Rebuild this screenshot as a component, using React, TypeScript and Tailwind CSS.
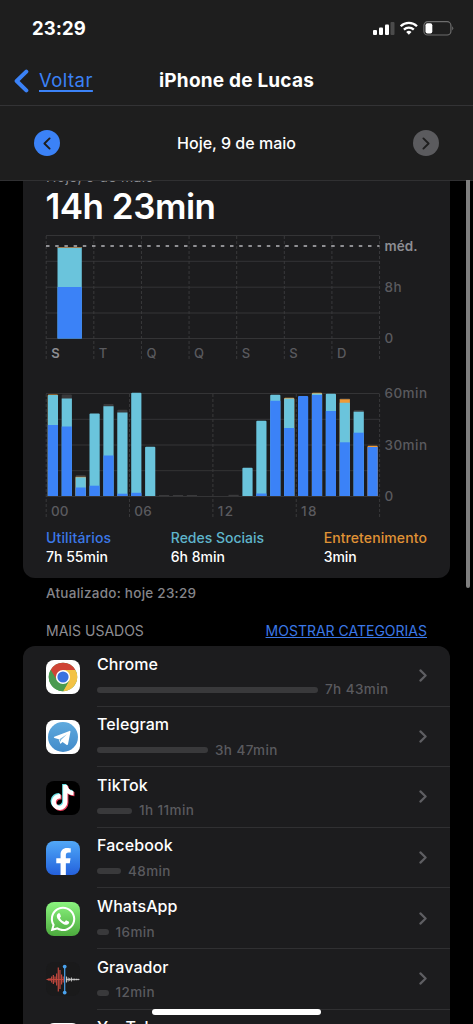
import type { ReactNode } from "react";
import { FaFacebookF, FaTiktok, FaWhatsapp } from "react-icons/fa";

const BLUE = "#3b82f7";
const TEAL = "#6ac4dc";
const ORANGE = "#f09a37";
const GRAY = "#39393b";

const ChromeIcon = () => (
    <svg viewBox="0 0 34 34" className="size-full bg-white">
        <circle cx="17" cy="17" r="14.2" fill="#4a9a4f" />
        <path d="M17 9.9H29.3A14.2 14.2 0 0 1 17 31.2L23.2 20.5Z" fill="#f3c244" />
        <path d="M4.7 9.9A14.2 14.2 0 0 1 29.3 9.9H17L10.9 20.6Z" fill="#cf4436" />
        <path d="M4.7 9.9L10.9 20.6L17 24L23.2 20.5L17 31.2A14.2 14.2 0 0 1 4.7 9.9Z" fill="#4a9a4f" />
        <circle cx="17" cy="17" r="7.1" fill="#fff" />
        <circle cx="17" cy="17" r="5.6" fill="#3871e0" />
    </svg>
);

const TelegramIcon = () => (
    <svg viewBox="0 0 34 34" className="size-full bg-white">
        <defs>
            <linearGradient id="telegram" x1="0" y1="0" x2="0" y2="1">
                <stop offset="0" stopColor="#5faade" />
                <stop offset="1" stopColor="#428bca" />
            </linearGradient>
        </defs>
        <circle cx="17" cy="17" r="15" fill="url(#telegram)" />
        <path
            d="M8.3 16.8L23.5 10.9Q24.6 10.6 24.4 11.9L22 24.2Q21.6 25.5 20.4 24.7L16.6 21.9L14.9 23.6Q14.2 24.1 14 23.1L12.8 19.2L8.4 17.9Q7.2 17.3 8.3 16.8Z"
            fill="#fff"
        />
        <path d="M13.4 19.3L21 14.3L15.2 19.7L14.6 22Z" fill="#7db7e0" />
    </svg>
);

const TikTokIcon = () => (
    <div className="relative size-full bg-black">
        <FaTiktok className="absolute left-[3px] top-[3.5px] size-[25px] text-[#69e0e5]" />
        <FaTiktok className="absolute left-[5px] top-[5.5px] size-[25px] text-[#e5405c]" />
        <FaTiktok className="absolute left-[4px] top-[4.5px] size-[25px] text-white" />
    </div>
);

const FacebookIcon = () => (
    <div className="flex size-full items-end justify-center bg-linear-to-b from-[#52a8f7] to-[#2560dc]">
        <FaFacebookF className="size-[27px]" />
    </div>
);

const WhatsAppIcon = () => (
    <div className="flex size-full items-center justify-center bg-linear-to-b from-[#8bf57f] to-[#4caa3d]">
        <FaWhatsapp className="size-[28px]" />
    </div>
);

const RecorderIcon = () => {
    const left = [1, 1.5, 3, 4.5, 3, 6, 12, 9.5, 5, 3];
    const right = [3, 2, 1.5, 2, 1, 1, 0.8, 0.8];
    return (
        <svg viewBox="0 0 34 34" className="size-full bg-[#1a1a1b]">
            <path d="M0.5 17.5H18" stroke="#b8433a" />
            <path d="M20 17.5H33.5" stroke="#d6d6d6" strokeWidth="0.8" />
            {left.map((h, i) => (
                <path key={i} d={`M${2.4 + i * 1.65} ${17.5 - h}V${17.5 + h}`} stroke="#c4493f" strokeWidth="1.2" />
            ))}
            {right.map((h, i) => (
                <path key={i} d={`M${20.5 + i * 1.65} ${17.5 - h}V${17.5 + h}`} stroke="#d6d6d6" strokeWidth="0.9" />
            ))}
            <path d="M18.7 4.5V30.5" stroke="#4aa3ef" strokeWidth="1.2" />
            <circle cx="18.7" cy="4.6" r="1.9" fill="#4aa3ef" />
            <circle cx="18.7" cy="30.6" r="1.9" fill="#4aa3ef" />
        </svg>
    );
};

const YouTubeIcon = () => (
    <svg viewBox="0 0 34 34" className="size-full bg-white">
        <rect x="4" y="8" width="26" height="18" rx="5" fill="#f00" />
        <path d="M14.5 13L21 17L14.5 21Z" fill="#fff" />
    </svg>
);

const Chevron = ({ className }: { className: string }) => (
    <svg viewBox="0 0 8 13" fill="none" stroke="currentColor" strokeLinecap="round" strokeLinejoin="round" className={className}>
        <path d="M1.4 1.4L6.6 6.5L1.4 11.6" />
    </svg>
);

const StatusBar = () => (
    <div className="flex h-[56px] items-center justify-between pl-8 pr-[19px]">
        <span className="pt-0.5 text-[18.5px] font-bold tracking-[0.1px]">23:29</span>
        <svg viewBox="0 0 82 16" className="h-4 w-[82px]">
            <g fill="#fff">
                <rect x="1" y="10" width="4" height="5" rx="1" />
                <rect x="7" y="7.5" width="4" height="7.5" rx="1" />
                <rect x="13" y="4.5" width="4" height="10.5" rx="1" />
                <rect x="18.5" y="2" width="4" height="13" rx="1" fill="#4b4b4b" />
            </g>
            <g fill="none" stroke="#fff" strokeWidth="2.3">
                <path d="M28.7 6.2A11.6 11.6 0 0 1 45 6.2" />
                <path d="M31.9 9.6A7.2 7.2 0 0 1 41.8 9.6" />
            </g>
            <path d="M34.2 12A4 4 0 0 1 39.5 12L36.85 14.8Z" fill="#fff" />
            <rect x="51.9" y="1.7" width="27" height="13.3" rx="3.8" fill="none" stroke="#6d6d6d" strokeWidth="1.2" />
            <rect x="53.5" y="3.2" width="6.8" height="10.3" rx="2" fill="#fff" />
            <path d="M80.2 6.2Q82.3 8.3 80.2 10.4Z" fill="#6d6d6d" />
        </svg>
    </div>
);

const DAYS = ["S", "T", "Q", "Q", "S", "S", "D"];

// left edge of the plot is x=23, right edge x=356.5
const WeekChart = () => (
    <svg viewBox="0 0 427 132" className="block h-[132px] w-full overflow-visible text-[13.5px] font-medium" fill="#5a5a5e">
        {[4.5, 30.3, 56.2, 82, 107.5].map((y) => (
            <path key={y} d={`M23 ${y}H356.5`} stroke="#343436" />
        ))}
        {[0, 1, 2, 3, 4, 5, 6, 7].map((i) => (
            <path key={i} d={`M${23.2 + i * 47.62} 5V130`} stroke="#39393b" strokeDasharray="3 2" />
        ))}
        <rect x="34.5" y="16.2" width="24.3" height="91.3" fill={TEAL} />
        <rect x="34.5" y="16" width="24.3" height="1" fill="#9a7a50" />
        <rect x="34.5" y="56" width="24.3" height="51.5" fill={BLUE} />
        <path d="M23 15H356.5" stroke="#8f8f93" strokeWidth="2" strokeDasharray="3.5 5.7" />
        {DAYS.map((day, i) => (
            <text key={i} x={28.2 + i * 47.62} y="127" fontSize="13" fill={i === 0 ? "#8d8d92" : undefined} fontWeight={i === 0 ? 600 : 500}>
                {day}
            </text>
        ))}
        <text x="361.5" y="20" fill="#8d8d92" fontWeight="600" textLength="33">méd.</text>
        <text x="361.5" y="61" textLength="17">8h</text>
        <text x="361.5" y="112.3">0</text>
    </svg>
);

// heights above the baseline: [blue, teal, orange, gray]
const HOURS: [number, number, number, number][] = [
    [71, 101, 101.5, 0],
    [69.5, 97.5, 0, 101.5],
    [8.5, 18.7, 19.2, 21],
    [10.3, 82.5, 0, 0],
    [40.5, 89.7, 0, 92],
    [2.3, 83.5, 0, 86.2],
    [3.2, 103.3, 0, 0],
    [0, 49.2, 0, 0],
    [0, 0, 0, 1],
    [0, 0, 0, 1],
    [0, 0, 0, 1],
    [0, 0, 0, 0],
    [0, 0, 0, 0],
    [0, 0, 0, 1.2],
    [0, 28.2, 0, 0],
    [2.5, 75.3, 0, 0],
    [95.3, 101.2, 0, 0],
    [68, 97.5, 98.2, 0],
    [100, 0, 0, 0],
    [101, 102.5, 103.2, 0],
    [85, 102.3, 0, 0],
    [53.7, 93.2, 96.8, 97.8],
    [63.3, 84.3, 0, 86],
    [49, 0, 50.3, 0],
];

const DayChart = () => (
    <svg viewBox="0 0 427 132" className="block h-[132px] w-full overflow-visible text-[13.5px] font-medium" fill="#5a5a5e">
        {[4.5, 30.3, 56, 81.7, 107.5].map((y) => (
            <path key={y} d={`M23 ${y}H356.5`} stroke="#343436" />
        ))}
        {[0, 1, 2, 3, 4].map((i) => (
            <path key={i} d={`M${23.2 + i * 83.35} 5V130`} stroke="#39393b" strokeDasharray="3 2" />
        ))}
        {HOURS.map(([blue, teal, orange, gray], i) => {
            const layers: [number, string][] = [[gray, GRAY], [orange, ORANGE], [teal, TEAL], [blue, BLUE]];
            const top = Math.max(blue, teal, orange, gray);
            return layers
                .filter(([h]) => h > 0)
                .map(([h, color]) => (
                    <path
                        key={`${i}${color}`}
                        d={
                            h > top - 1 && h > 2
                                ? `M${24.8 + i * 13.9} 107V${108 - h}q0 -1 1 -1h8.2q1 0 1 1V107Z`
                                : `M${24.8 + i * 13.9} 107V${107 - h}h10.2V107Z`
                        }
                        fill={color}
                    />
                ));
        })}
        {["00", "06", "12", "18"].map((label, i) => (
            <text key={label} x={28 + i * 83.35} y="127.3" textLength={i > 1 ? 15.5 : 17.5}>
                {label}
            </text>
        ))}
        <text x="361.5" y="9.3" textLength="42.5">60min</text>
        <text x="361.5" y="60.8" textLength="42.5">30min</text>
        <text x="361.5" y="112.3">0</text>
    </svg>
);

interface AppUsage {
    name: string;
    time: string;
    width: number;
    icon: ReactNode;
}

const APPS: AppUsage[] = [
    { name: "Chrome", time: "7h 43min", width: 221, icon: <ChromeIcon /> },
    { name: "Telegram", time: "3h 47min", width: 111, icon: <TelegramIcon /> },
    { name: "TikTok", time: "1h 11min", width: 35, icon: <TikTokIcon /> },
    { name: "Facebook", time: "48min", width: 24, icon: <FacebookIcon /> },
    { name: "WhatsApp", time: "16min", width: 11.5, icon: <WhatsAppIcon /> },
    { name: "Gravador", time: "12min", width: 11.5, icon: <RecorderIcon /> },
    { name: "YouTube", time: "8min", width: 11.5, icon: <YouTubeIcon /> },
];

const AppRow = ({ app }: { app: AppUsage }) => (
    <div className="flex h-[60.6px] shrink-0 pl-[23px]">
        <div className="mt-[13.5px] size-[34px] overflow-hidden rounded-lg">{app.icon}</div>
        <div className="ml-[17px] flex flex-1 justify-between border-b border-[#303032] pr-[23px]">
            <div>
                <p className="mt-[6.6px] text-[16px] font-medium leading-[22px] tracking-[0.1px]">{app.name}</p>
                <div className="mt-[5.6px] flex items-center gap-[7px]">
                    <div className="h-[6px] rounded-full bg-[#39393b]" style={{ width: app.width }} />
                    <span className="text-[13.5px] font-medium leading-[19px] tracking-[0.4px] text-[#5a5a5e]">{app.time}</span>
                </div>
            </div>
            <Chevron className="mt-[23.2px] h-[13px] w-2 stroke-[2.2] text-[#5e5e62]" />
        </div>
    </div>
);

export default function App() {
    return (
        <div className="relative flex h-[1024px] w-[473px] flex-col overflow-hidden bg-black font-['Inter',sans-serif] text-white">
            {/* Header */}
            <header className="h-[181px] shrink-0 border-b border-[#303032] bg-[#1e1e1e]">
                <StatusBar />
                <nav className="flex h-[50px] items-center border-b border-[#333335] pl-[14px]">
                    <div className="flex w-[145px] items-center gap-[10px] text-[#3b82f7]">
                        <Chevron className="h-[24px] w-[15px] rotate-180 stroke-[2.2]" />
                        <a className="text-[18.5px] tracking-[0.45px] underline decoration-[1.5px] underline-offset-[3px]">Voltar</a>
                    </div>
                    <h1 className="pt-0.5 text-[19px] font-bold tracking-[0.2px]">iPhone de Lucas</h1>
                </nav>
                <div className="flex h-[74px] items-center justify-between pl-[34px] pr-[34px]">
                    <button className="flex size-[26px] items-center justify-center rounded-full bg-[#3b82f7] text-[#1e1e1e]">
                        <Chevron className="mr-px h-[13px] w-2 rotate-180 stroke-[1.9]" />
                    </button>
                    <span className="text-[16px] font-medium">Hoje, 9 de maio</span>
                    <button className="flex size-[26px] items-center justify-center rounded-full bg-[#5b5b5e] text-[#1e1e1e]">
                        <Chevron className="ml-px h-[13px] w-2 stroke-[1.9]" />
                    </button>
                </div>
            </header>

            <main className="flex min-h-0 flex-1 flex-col overflow-hidden px-[23px]">
                {/* Usage summary */}
                <section className="h-[397px] shrink-0 overflow-hidden rounded-b-xl bg-[#1c1c1e]">
                    <p className="-mt-[14px] h-[19px] pl-[23px] text-[14px] leading-5 tracking-[0.3px] text-[#8d8d92]">Hoje, 9 de maio</p>
                    <h2 className="-mt-px h-[43px] pl-[22.5px] text-[35px] font-semibold leading-[42px] tracking-[-0.5px]">14h 23min</h2>
                    <div className="mt-[3px]">
                        <WeekChart />
                    </div>
                    <div className="mt-[26px]">
                        <DayChart />
                    </div>
                    <div className="mt-[7px] flex justify-between pl-[23px] pr-[23px] text-[14px] font-medium leading-[19px]">
                        <div>
                            <p className="tracking-[0.15px] text-[#3b78e7]">Utilitários</p>
                            <p>7h 55min</p>
                        </div>
                        <div>
                            <p className="text-[#5fb5cb]">Redes Sociais</p>
                            <p>6h 8min</p>
                        </div>
                        <div>
                            <p className="tracking-[0.1px] text-[#e09335]">Entretenimento</p>
                            <p>3min</p>
                        </div>
                    </div>
                </section>

                <p className="mt-[5px] pl-[23px] text-[13.5px] font-medium leading-5 tracking-[0.25px] text-[#85858a]">Atualizado: hoje 23:29</p>
                <div className="mt-[18px] flex shrink-0 justify-between px-[23px] text-[14px] leading-5">
                    <span className="text-[#8d8d92]">MAIS USADOS</span>
                    <a className="text-[#3b78e7] underline">MOSTRAR CATEGORIAS</a>
                </div>

                {/* Most used */}
                <section className="mt-[5px] flex min-h-0 flex-1 flex-col overflow-hidden rounded-t-xl bg-[#1c1c1e]">
                    {APPS.map((app) => (
                        <AppRow key={app.name} app={app} />
                    ))}
                </section>
            </main>

            {/* Scroll thumb and home indicator */}
            <div className="absolute right-[3px] top-[180px] h-[408px] w-[4px] rounded-b-full bg-[#7f7f7f]" />
            <div className="absolute bottom-[9px] left-[152px] h-[6px] w-[169px] rounded-full bg-white" />
        </div>
    );
}
